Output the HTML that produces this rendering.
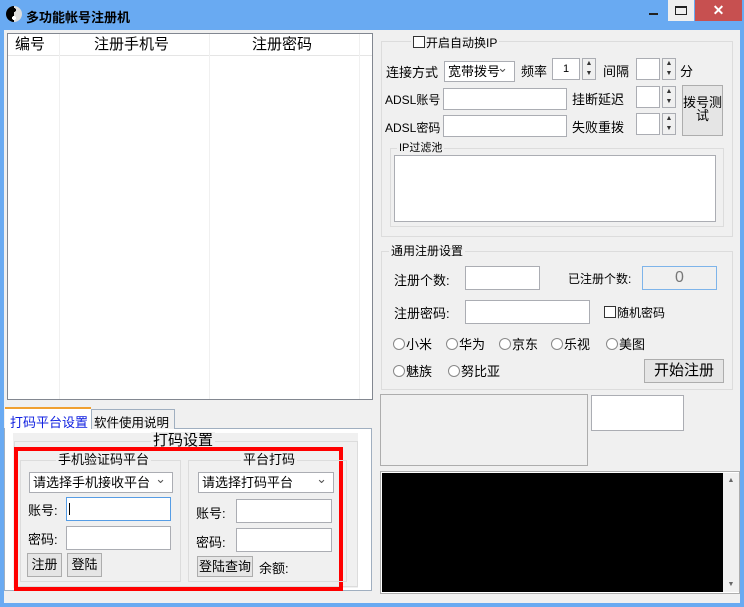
<!DOCTYPE html><html><head><meta charset="utf-8"><style>
*{box-sizing:border-box;margin:0;padding:0}
body{width:744px;height:607px;background:#69aaf2;position:relative;overflow:hidden;font-family:"Liberation Sans","Noto Sans CJK SC",sans-serif;font-size:13px;color:#000}
.a{position:absolute;white-space:nowrap}
.in{position:absolute;background:#fff;border:1px solid #abadb3}
.btn{position:absolute;background:#e5e5e5;border:1px solid #adadad;text-align:center}
.gb{position:absolute;border:1px solid #dcdcdc}
.lg{position:absolute;background:#f0f0f0;padding:0 2px;line-height:14px;white-space:nowrap}
.sel{position:absolute;background:#fff;border:1px solid #abadb3;padding-left:3px;line-height:20px;white-space:nowrap}
.sel:after{content:"⌄";position:absolute;right:6px;top:-4px;color:#555;font-size:13px}
.spin{position:absolute;width:14px;border:1px solid #abadb3;background:#f0f0f0;font-size:7px;text-align:center;line-height:10px;color:#333}
.r{display:inline-block;width:12px;height:12px;border:1px solid #888;border-radius:50%;background:#fff;vertical-align:-1px;margin-right:1px}
.cb{display:inline-block;width:12px;height:12px;border:1px solid #333;background:#fff;vertical-align:-1px;margin-right:1px}
</style></head><body>
<div class="a" style="left:6px;top:6px;width:16px;height:16px;border-radius:50%;background:radial-gradient(circle at 50% 75%,#fff 2px,transparent 2px),radial-gradient(circle at 50% 25%,#000 2px,transparent 2px),linear-gradient(90deg,#000 50%,#ddd 50%)"></div>
<div class="a" style="left:26px;top:7px;font-size:13px;font-weight:bold">多功能帐号注册机</div>
<div class="a" style="left:649px;top:13px;width:9px;height:2px;background:#222"></div>
<div class="a" style="left:668px;top:0;width:26px;height:21px;background:#efefef"><div class="a" style="left:7px;top:6px;width:12px;height:9px;border:1px solid #222;border-top-width:2px"></div></div>
<div class="a" style="left:695px;top:0;width:47px;height:21px;background:#c75050;color:#fff;text-align:center;font-size:14px;line-height:21px;font-weight:bold">✕</div>
<div class="a" style="left:4px;top:30px;width:736px;height:573px;background:#f0f0f0"></div>
<!-- list -->
<div class="in" style="left:7px;top:33px;width:366px;height:367px;border-color:#828790">
<div class="a" style="left:0;top:0;width:364px;height:22px;border-bottom:1px solid #e5e5e5;font-size:15px;line-height:22px">
<span class="a" style="left:7px">编号</span><span class="a" style="left:86px">注册手机号</span><span class="a" style="left:244px">注册密码</span></div>
<div class="a" style="left:51px;top:0;width:1px;height:365px;background:#f0f0f0"></div>
<div class="a" style="left:201px;top:0;width:1px;height:365px;background:#f0f0f0"></div>
<div class="a" style="left:351px;top:0;width:1px;height:365px;background:#f0f0f0"></div>
</div>
<!-- tabs -->
<div class="a" style="left:4px;top:428px;width:368px;height:163px;background:#fff;border:1px solid #a0afc0"></div>
<div class="a" style="left:5px;top:407px;width:86px;height:23px;background:#fff;border-top:2px solid #f0a030;color:#1020e0;font-size:13px;padding:3px 0 0 5px">打码平台设置</div>
<div class="a" style="left:91px;top:409px;width:84px;height:20px;background:#f0f0f0;border:1px solid #a0afc0;border-bottom:none;padding:2px 0 0 2px;font-size:12.5px">软件使用说明</div>
<div class="a" style="left:13px;top:433px;width:345px;height:155px;background:#f0f0f0"></div>
<div class="gb" style="left:14px;top:441px;width:344px;height:146px"></div>
<div class="lg" style="left:151px;top:432px;font-size:15px;line-height:18px">打码设置</div>
<div class="a" style="left:14px;top:447px;width:329px;height:144px;border:4px solid #ff0000"></div>
<div class="gb" style="left:20px;top:460px;width:161px;height:122px"></div>
<div class="lg" style="left:56px;top:453px">手机验证码平台</div>
<div class="sel" style="left:29px;top:472px;width:144px;height:21px">请选择手机接收平台</div>
<div class="a" style="left:28px;top:500px">账号:</div>
<div class="in" style="left:66px;top:497px;width:105px;height:24px;border-color:#569de5"><div class="a" style="left:2px;top:5px;width:1px;height:12px;background:#000"></div></div>
<div class="a" style="left:28px;top:529px">密码:</div>
<div class="in" style="left:66px;top:526px;width:105px;height:24px"></div>
<div class="btn" style="left:27px;top:553px;width:35px;height:24px;line-height:22px">注册</div>
<div class="btn" style="left:67px;top:553px;width:35px;height:24px;line-height:22px">登陆</div>
<div class="gb" style="left:188px;top:460px;width:159px;height:122px"></div>
<div class="lg" style="left:241px;top:453px">平台打码</div>
<div class="sel" style="left:198px;top:472px;width:136px;height:21px">请选择打码平台</div>
<div class="a" style="left:196px;top:503px">账号:</div>
<div class="in" style="left:236px;top:499px;width:96px;height:24px"></div>
<div class="a" style="left:196px;top:532px">密码:</div>
<div class="in" style="left:236px;top:528px;width:96px;height:24px"></div>
<div class="btn" style="left:197px;top:556px;width:56px;height:21px;line-height:19px">登陆查询</div>
<div class="a" style="left:259px;top:558px">余额:</div>
<!-- right -->
<div class="gb" style="left:381px;top:41px;width:352px;height:196px"></div>
<div class="lg" style="left:411px;top:36px;font-size:12px"><span class="cb"></span>开启自动换IP</div>
<div class="a" style="left:386px;top:62px">连接方式</div>
<div class="sel" style="left:444px;top:61px;width:71px;height:21px;font-size:13px">宽带拨号</div>
<div class="a" style="left:521px;top:61px">频率</div>
<div class="in" style="left:552px;top:58px;width:28px;height:22px;text-align:center;font-size:11px;line-height:20px">1</div>
<div class="spin" style="left:582px;top:58px;height:22px">▲<br>▼</div>
<div class="a" style="left:603px;top:61px">间隔</div>
<div class="in" style="left:636px;top:58px;width:24px;height:22px"></div>
<div class="spin" style="left:662px;top:58px;height:22px">▲<br>▼</div>
<div class="a" style="left:680px;top:61px">分</div>
<div class="a" style="left:385px;top:91px;font-size:12px">ADSL账号</div>
<div class="in" style="left:443px;top:88px;width:124px;height:22px"></div>
<div class="a" style="left:572px;top:89px">挂断延迟</div>
<div class="in" style="left:636px;top:86px;width:24px;height:22px"></div>
<div class="spin" style="left:662px;top:86px;height:22px">▲<br>▼</div>
<div class="btn" style="left:682px;top:85px;width:41px;height:51px;padding-top:10px;line-height:13px;white-space:normal">拨号测<br>试</div>
<div class="a" style="left:385px;top:119px;font-size:12px">ADSL密码</div>
<div class="in" style="left:443px;top:115px;width:124px;height:22px"></div>
<div class="a" style="left:572px;top:117px">失败重拨</div>
<div class="in" style="left:636px;top:113px;width:24px;height:22px"></div>
<div class="spin" style="left:662px;top:113px;height:22px">▲<br>▼</div>
<div class="gb" style="left:390px;top:148px;width:334px;height:79px"></div>
<div class="lg" style="left:397px;top:141px;font-size:11px">IP过滤池</div>
<div class="in" style="left:394px;top:155px;width:322px;height:67px"></div>
<div class="gb" style="left:381px;top:251px;width:352px;height:139px"></div>
<div class="lg" style="left:389px;top:244px;font-size:12px">通用注册设置</div>
<div class="a" style="left:394px;top:270px">注册个数:</div>
<div class="in" style="left:465px;top:266px;width:75px;height:24px"></div>
<div class="a" style="left:568px;top:270px;font-size:12px">已注册个数:</div>
<div class="a" style="left:642px;top:266px;width:75px;height:24px;border:1px solid #7eb4ea;background:#f0f0f0;text-align:center;color:#777;font-size:16px;line-height:22px">0</div>
<div class="a" style="left:394px;top:303px">注册密码:</div>
<div class="in" style="left:465px;top:300px;width:125px;height:24px"></div>
<div class="a" style="left:604px;top:304px;font-size:12px"><span class="cb"></span>随机密码</div>
<div class="a" style="left:393px;top:334px"><span class="r"></span>小米</div>
<div class="a" style="left:446px;top:334px"><span class="r"></span>华为</div>
<div class="a" style="left:499px;top:334px"><span class="r"></span>京东</div>
<div class="a" style="left:551px;top:334px"><span class="r"></span>乐视</div>
<div class="a" style="left:606px;top:334px"><span class="r"></span>美图</div>
<div class="a" style="left:393px;top:361px"><span class="r"></span>魅族</div>
<div class="a" style="left:448px;top:361px"><span class="r"></span>努比亚</div>
<div class="btn" style="left:644px;top:359px;width:80px;height:24px;font-size:15px;line-height:22px">开始注册</div>
<div class="a" style="left:380px;top:394px;width:208px;height:72px;border:1px solid #adadad"></div>
<div class="in" style="left:591px;top:395px;width:93px;height:36px"></div>
<div class="a" style="left:380px;top:471px;width:360px;height:123px;border:1px solid #adadad;background:#fff"><div class="a" style="left:1px;top:1px;width:341px;height:119px;background:#000"></div>
<div class="a" style="left:342px;top:1px;width:16px;height:119px;background:#f0f0f0;font-size:7px;color:#666;text-align:center"><div style="margin-top:4px">▲</div><div style="position:absolute;bottom:4px;width:16px">▼</div></div></div>
</body></html>
